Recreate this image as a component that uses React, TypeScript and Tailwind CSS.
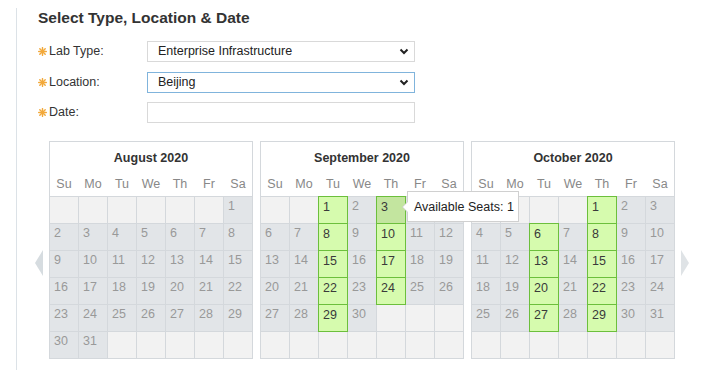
import React from "react";

type Cell = { day: number | null; green?: boolean; hover?: boolean; hidden?: boolean };

function buildMonth(startDow: number, days: number, green: number[], hover?: number, hiddenDays: number[] = []): Cell[] {
  const cells: Cell[] = [];
  for (let i = 0; i < 42; i++) {
    const d = i - startDow + 1;
    if (d < 1 || d > days) cells.push({ day: null });
    else cells.push({ day: d, green: green.includes(d), hover: d === hover, hidden: hiddenDays.includes(d) });
  }
  return cells;
}

const DOW = ["Su", "Mo", "Tu", "We", "Th", "Fr", "Sa"];

function Asterisk() {
  return (
    <svg width="9" height="9" viewBox="0 0 8 8" className="mr-[2px] shrink-0">
      <g stroke="#f2a93b" strokeWidth="1.3" strokeLinecap="round">
        <line x1="4" y1="0.6" x2="4" y2="7.4" />
        <line x1="0.6" y1="4" x2="7.4" y2="4" />
        <line x1="1.6" y1="1.6" x2="6.4" y2="6.4" />
        <line x1="6.4" y1="1.6" x2="1.6" y2="6.4" />
      </g>
    </svg>
  );
}

function Chevron() {
  return (
    <svg width="10" height="7" viewBox="0 0 10 7">
      <path d="M1.5 1.5 L5 5 L8.5 1.5" fill="none" stroke="#222" strokeWidth="2" />
    </svg>
  );
}

function FormRow({ label, value, focused, select, mt }: { label: string; value?: string; focused?: boolean; select?: boolean; mt: string }) {
  return (
    <div className={`flex items-center ${mt}`}>
      <div className="flex items-center w-[109px] text-[12.5px] text-[#333]">
        <Asterisk />
        <span>{label}</span>
      </div>
      <div
        className={`flex items-center justify-between w-[268px] h-[21px] bg-white pl-[10px] pr-[5px] text-[12.5px] text-[#222] border ${
          focused ? "border-[#80b4dc]" : "border-[#d9d9d9]"
        }`}
      >
        <span>{value ?? ""}</span>
        {select && <Chevron />}
      </div>
    </div>
  );
}

function Month({ title, cells }: { title: string; cells: Cell[] }) {
  return (
    <div className="w-[204px] border border-[#d4d8dc] bg-white shrink-0">
      <div className="pt-[9px] text-center text-[12.5px] leading-[14px] font-bold text-[#333]">{title}</div>
      <div className="mt-[12px] mb-[5px] grid grid-cols-7 gap-px text-[12.5px] leading-[14px] text-[#888]">
        {DOW.map((d) => (
          <div key={d} className="text-center">
            {d}
          </div>
        ))}
      </div>
      <div className="grid grid-cols-7 gap-px bg-[#d4d8dc] pt-px">
        {cells.map((c, i) => {
          if (c.day === null)
            return <div key={i} className="h-[26px] bg-[#f2f2f2]" />;
          if (c.green)
            return (
              <div
                key={i}
                className={`relative h-[26px] pl-[4px] pt-[3px] text-[12.5px] leading-[14px] text-[#3a3a3a] ring-1 ring-[#6cbf3c] z-10 ${
                  c.hover ? "bg-[#c3e59f]" : "bg-[#d6fbae]"
                }`}
              >
                {c.day}
                {c.hover && (
                  <div className="absolute left-[calc(100%+2px)] top-[-6px] z-30 w-[112px] h-[31px] bg-white border border-[#d0d0d0] flex items-center pl-[6px] text-[12.5px] text-[#222] whitespace-nowrap">
                    <div className="absolute left-[-6px] top-[9px] w-0 h-0 border-y-[6px] border-y-transparent border-r-[6px] border-r-[#d0d0d0]" />
                    <div className="absolute left-[-5px] top-[10px] w-0 h-0 border-y-[5px] border-y-transparent border-r-[5px] border-r-white" />
                    Available Seats: 1
                  </div>
                )}
              </div>
            );
          return (
            <div key={i} className="h-[26px] bg-[#e2e5e8] pl-[4px] pt-[2px] text-[12.5px] leading-[14px] text-[#999]">
              {c.hidden ? "" : c.day}
            </div>
          );
        })}
      </div>
    </div>
  );
}

export default function App() {
  const aug = buildMonth(6, 31, []);
  const sep = buildMonth(2, 30, [1, 3, 8, 10, 15, 17, 22, 24, 29], 3, [4, 5]);
  const oct = buildMonth(4, 31, [1, 6, 8, 13, 15, 20, 22, 27, 29]);

  return (
    <div className="w-[716px] h-[378px] bg-white overflow-hidden" style={{ fontFamily: '"Liberation Sans", Arial, sans-serif' }}>
      <div className="ml-[16px] mt-[8px] h-[362px] border-l border-[#dce2e7] pl-[21px]">
        <div className="pt-[1px] text-[15.5px] leading-[18px] font-bold text-[#333]">Select Type, Location &amp; Date</div>
        <FormRow label="Lab Type:" value="Enterprise Infrastructure" select mt="mt-[14px]" />
        <FormRow label="Location:" value="Beijing" select focused mt="mt-[10px]" />
        <FormRow label="Date:" mt="mt-[9px]" />
        <div className="mt-[18px] -ml-[3px] flex items-start">
          <div className="mt-[109px] mr-[6px] w-0 h-0 border-y-[13px] border-y-transparent border-r-[8px] border-r-[#d6dce0]" />
          <div className="flex gap-[7px]">
            <Month title="August 2020" cells={aug} />
            <div className="relative z-20">
              <Month title="September 2020" cells={sep} />
            </div>
            <Month title="October 2020" cells={oct} />
          </div>
          <div className="mt-[109px] ml-[6px] w-0 h-0 border-y-[13px] border-y-transparent border-l-[8px] border-l-[#dfe3e6]" />
        </div>
      </div>
    </div>
  );
}
